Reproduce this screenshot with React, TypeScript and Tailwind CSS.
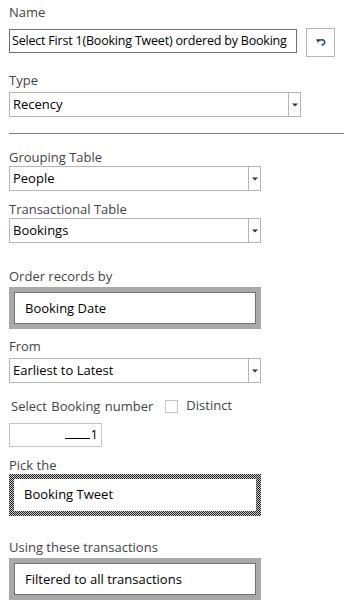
import React from "react";

const font = { fontFamily: '"Segoe UI", "Open Sans", "Noto Sans", sans-serif' };

function Label({ children, className = "" }: { children: React.ReactNode; className?: string }) {
  return <div className={`text-[13px] leading-[18px] text-[#444] ${className}`}>{children}</div>;
}

function Select({ value, wide }: { value: string; wide?: boolean }) {
  return (
    <div
      className={`flex h-[25px] border border-[#b5b5b5] bg-white ${wide ? "w-[292px]" : "w-[252px]"}`}
    >
      <div className="flex-1 pl-[3px] text-[13px] leading-[23px] text-black">{value}</div>
      <div className="flex w-[12px] items-center justify-center border-l border-[#b5b5b5]">
        <svg width="6" height="4" viewBox="0 0 6 4">
          <path d="M0 0.5h6L3 3.5z" fill="#333" />
        </svg>
      </div>
    </div>
  );
}

function Boxed({ value, checker }: { value: string; checker?: boolean }) {
  return (
    <div
      className={`w-[252px] p-[5px] ${
        checker
          ? "bg-[repeating-conic-gradient(#222_0_25%,#c8c8c8_0_50%)] bg-[length:2px_2px]"
          : "bg-[#a9a9a9]"
      }`}
    >
      <div
        className={`h-[32px] bg-white pl-[10px] text-[13px] leading-[30px] text-black ${
          checker ? "" : "border border-[#707070]"
        }`}
      >
        {value}
      </div>
    </div>
  );
}

export default function App() {
  return (
    <div className="h-[606px] w-[344px] overflow-hidden bg-white" style={font}>
      <div className="px-[9px] pt-[3px]">
        <Label className="text-[#333]">Name</Label>
        <div className="mt-[8px] flex items-start gap-[9px]">
          <div className="h-[24px] w-[291px] overflow-hidden whitespace-nowrap border border-[#6f6f6f] pl-[2px] text-[12.5px] leading-[22px] tracking-[-0.2px] text-black">
            Select First 1(Booking Tweet) ordered by Booking
          </div>
          <button className="-mt-[1px] flex h-[29px] w-[29px] items-center justify-center border border-[#b5b5b5] bg-white">
            <svg width="12" height="9" viewBox="0 0 12 9">
              <path d="M4 2.5 Q7 1 9 2.5 Q10.5 4 9 6 Q8 7 6.5 7" fill="none" stroke="#1f3a8a" strokeWidth="1.4" />
              <path d="M1 1.5 L5 1 L3 5 Z" fill="#1f3a8a" />
            </svg>
          </button>
        </div>

        <Label className="mt-[14px] text-[#333]">Type</Label>
        <div className="mt-[3px]">
          <Select value="Recency" wide />
        </div>
      </div>

      <div className="ml-[9px] mt-[16px] h-px bg-[#808080]" />

      <div className="px-[9px]">
        <Label className="mt-[14px]">Grouping Table</Label>
        <div>
          <Select value="People" />
        </div>

        <Label className="mt-[9px]">Transactional Table</Label>
        <div>
          <Select value="Bookings" />
        </div>

        <Label className="mt-[24px]">Order records by</Label>
        <div className="mt-[2px]">
          <Boxed value="Booking Date" />
        </div>

        <Label className="mt-[8px]">From</Label>
        <div className="mt-[3px]">
          <Select value="Earliest to Latest" />
        </div>

        <div className="mt-[14px] flex items-center">
          <Label className="pl-[2px] [word-spacing:1px]">Select Booking number</Label>
          <div className="ml-[12px] h-[13px] w-[13px] border border-[#c4c4c4] bg-white" />
          <Label className="ml-[8px] -mt-[3px]">Distinct</Label>
        </div>
        <div className="mt-[8px] flex h-[24px] w-[93px] items-center justify-end border border-[#c4c4c4] pr-[3px] text-[13px] text-black">
          <span className="mr-[1px] mt-[6px] h-px w-[25px] bg-black" />
          <span>1</span>
        </div>

        <Label className="mt-[9px]">Pick the</Label>
        <div>
          <Boxed value="Booking Tweet" checker />
        </div>

        <Label className="mt-[22px]">Using these transactions</Label>
        <div className="mt-[2px]">
          <Boxed value="Filtered to all transactions" />
        </div>
      </div>
    </div>
  );
}
